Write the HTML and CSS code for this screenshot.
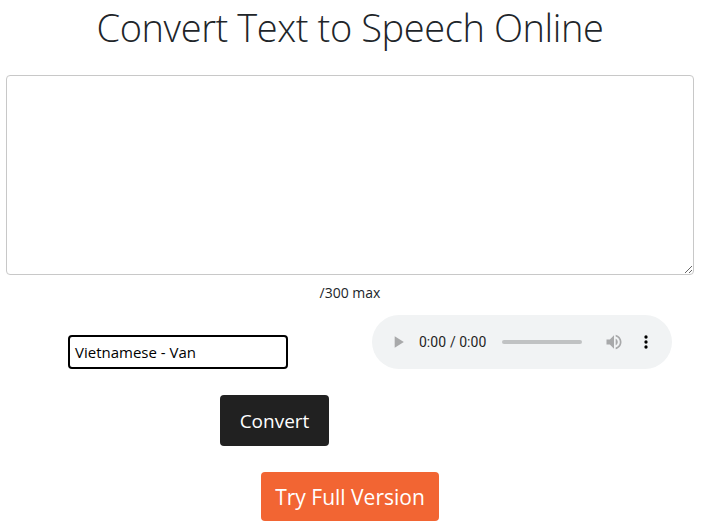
FILE: index.html
```html
<!DOCTYPE html>
<html lang="en">
<head>
<meta charset="utf-8">
<title>Convert Text to Speech Online</title>
<link rel="stylesheet" href="styles.css">
</head>
<body>
<main class="page">
  <h1 class="title">Convert Text to Speech Online</h1>
  <textarea class="text-input"></textarea>
  <p class="counter">/300 max</p>
  <div class="row">
    <div class="col col-voice">
      <div class="voice-select">Vietnamese - Van</div>
    </div>
    <div class="col col-audio">
      <audio class="player" controls></audio>
    </div>
  </div>
  <div class="convert-row">
    <button class="btn btn-dark" type="button">Convert</button>
  </div>
  <div class="full-row">
    <button class="btn btn-orange" type="button">Try Full Version</button>
  </div>
</main>
</body>
</html>
```
FILE: styles.css
```css
html, body {
  margin: 0;
  padding: 0;
  background: #ffffff;
}
body {
  font-family: "Open Sans", "Noto Sans", sans-serif;
  color: #212529;
}
.page {
  width: 688px;
  padding: 0 11px 0 6px;
  display: flex;
  flex-direction: column;
}
.title {
  margin: 0;
  padding-top: 3px;
  height: 72px;
  box-sizing: border-box;
  text-align: center;
  font-size: 38px;
  letter-spacing: -0.4px;
  font-weight: 300;
  line-height: 48px;
  color: #212529;
}
.text-input {
  display: block;
  width: 688px;
  height: 200px;
  margin: 3px 0 0;
  box-sizing: border-box;
  border: 1px solid #c8c8c8;
  border-radius: 4px;
  resize: vertical;
  font: inherit;
}
.counter {
  margin: 8px 0 0;
  text-align: center;
  font-size: 14px;
  line-height: 20px;
  color: #212529;
}
.row {
  display: grid;
  grid-template-columns: 1fr 1fr;
  margin-top: 12px;
  height: 56px;
}
.col {
  display: flex;
  justify-content: center;
}
.col-voice {
  align-items: flex-end;
  padding-bottom: 2px;
}
.voice-select {
  width: 220px;
  height: 34px;
  box-sizing: border-box;
  border: 2px solid #000;
  border-radius: 4px;
  padding: 0 5px;
  font-size: 15px;
  line-height: 30px;
  color: #000;
}
.col-audio {
  align-items: flex-start;
}
.player {
  width: 300px;
  height: 54px;
}
.convert-row {
  display: flex;
  padding-left: 214px;
  margin-top: 24px;
}
.full-row {
  display: flex;
  justify-content: center;
  margin-top: 26px;
}
.btn {
  border: none;
  border-radius: 4px;
  color: #fff;
  font-family: inherit;
  cursor: pointer;
}
.btn-dark {
  width: 109px;
  height: 51px;
  background: #212121;
  font-size: 19px;
}
.btn-orange {
  width: 178px;
  height: 49px;
  background: #f26533;
  font-size: 21px;
}
```
